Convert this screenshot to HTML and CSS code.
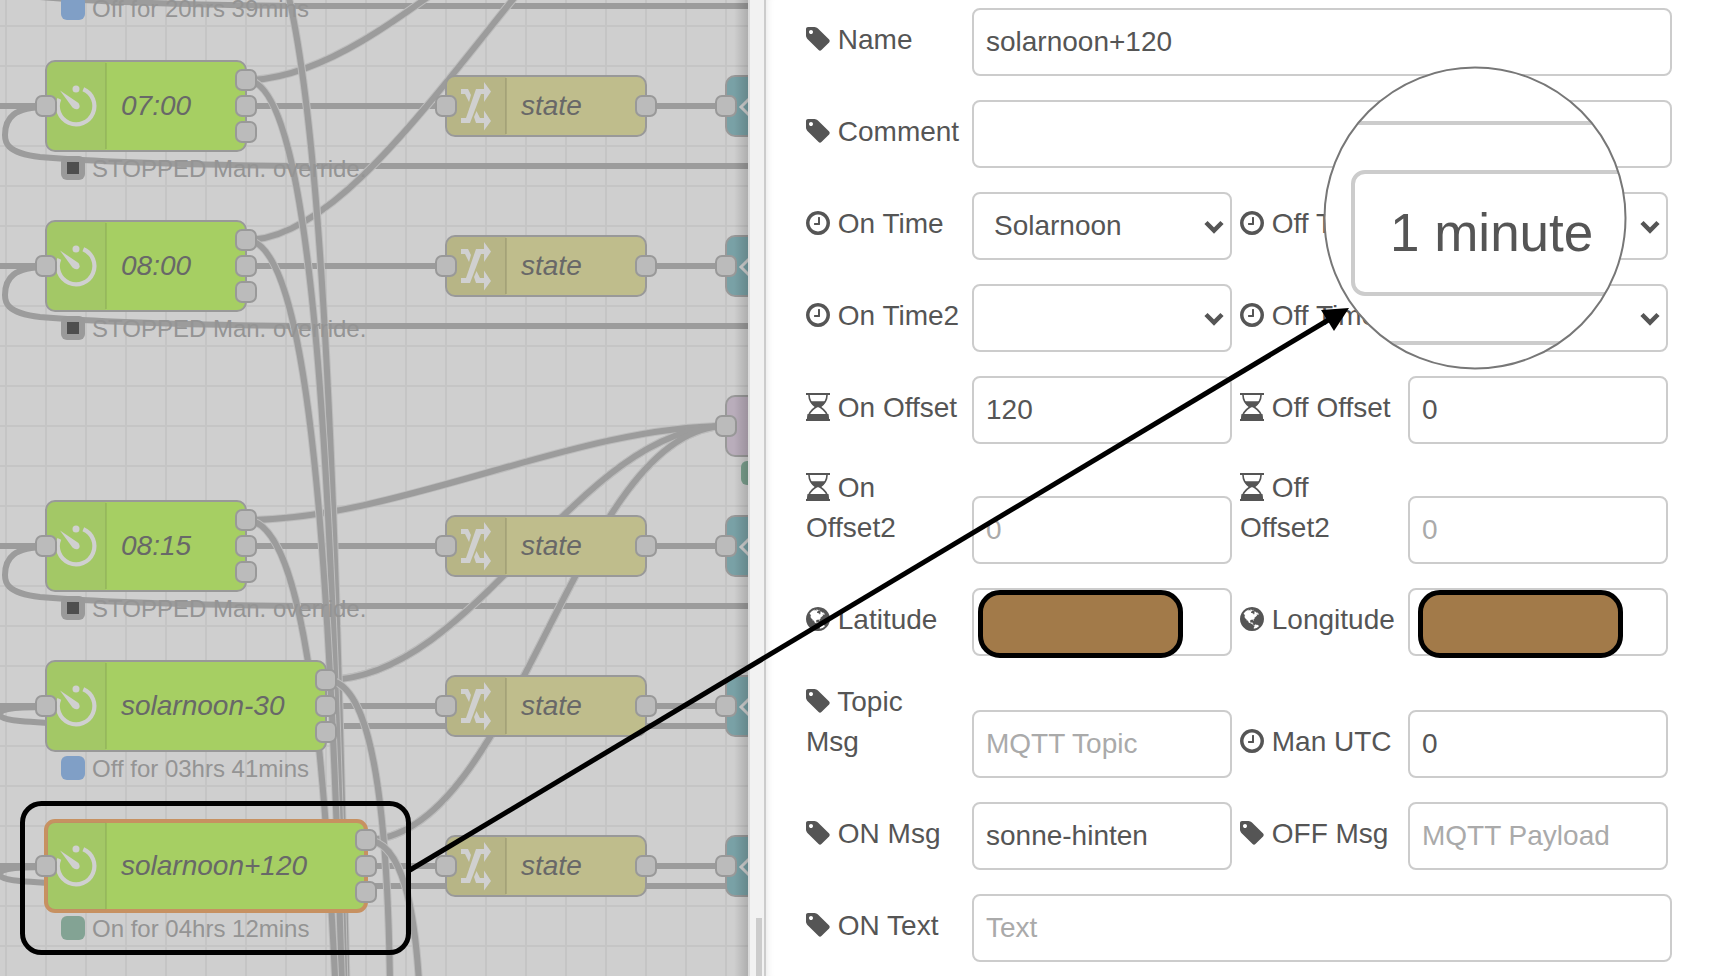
FILE: index.html
```html
<!DOCTYPE html>
<html lang="en">
<head>
<meta charset="utf-8">
<title>Edit schedule node</title>
<link rel="stylesheet" href="styles.css">
</head>
<body>
<svg class="sprite" width="0" height="0" aria-hidden="true">
  <symbol id="i-tag" viewBox="0 0 1536 1792"><path d="M448 448q0-53-37.500-90.500T320 320t-90.500 37.500T192 448t37.500 90.500T320 576t90.500-37.500T448 448zm1067 576q0 53-37 90l-491 492q-39 37-91 37-53 0-90-37L91 890Q53 853 26.500 788T0 669V256q0-52 38-90t90-38h416q53 0 118 26.500t103 63.500l715 714q37 39 37 91z"/></symbol>
  <symbol id="i-clock" viewBox="0 0 1536 1792"><path d="M896 544v448q0 14-9 23t-23 9H544q-14 0-23-9t-9-23v-64q0-14 9-23t23-9h224V544q0-14 9-23t23-9h64q14 0 23 9t9 23zm416 352q0-148-73-273t-198-198-273-73-273 73-198 198-73 273 73 273 198 198 273 73 273-73 198-198 73-273zm224 0q0 209-103 385.500T1153.500 1561 768 1664t-385.500-103T103 1281.500 0 896t103-385.500T382.500 231 768 128t385.500 103T1433 510.500 1536 896z"/></symbol>
  <symbol id="i-glass" viewBox="0 0 24 28"><path d="M0 0h24v2H0zM0 26h24v2H0zM1.500 21h21l.7 5.500H.8z"/><path d="M3 2C3 9 7 12 10 14C7 16 2 19 2 26M21 2C21 9 17 12 14 14C17 16 22 19 22 26" fill="none" stroke="currentColor" stroke-width="1.600"/><path d="M4.500 8.300h15C18.500 11 16 13 14 14.200h-4C8 13 5.500 11 4.500 8.300z"/></symbol>
  <symbol id="i-globe" viewBox="0 0 1536 1792"><path d="M768 128q209 0 385.500 103t279.500 279.500 103 385.500-103 385.500-279.500 279.500-385.500 103-385.500-103-279.500-279.500-103-385.500 103-385.500 279.500-279.500 385.500-103zm274 521q-2 1-9.500 9.500t-13.500 9.500q2 0 4.500-5t5-11 3.500-7q6-7 22-15 14-6 52-12 34-8 51 11-2-2 9.500-13t14.500-12q3-2 15-4.500t15-7.500l2-22q-12 1-17.500-7t-6.500-21q0 2-6 8 0-7-4.500-8t-11.500 1-9 1q-10-3-15-7.500t-8-16.500-4-15q-2-5-9.500-11t-9.500-10q-1-2-2.500-5.500t-3-6.500-4-5.500-5.500-2.500-7 5-7.500 10-4.500 5q-3-2-6-1.500t-4.500 1-4.500 3-5 3.500q-3 2-8.500 3t-8.500 2q15-5-1-11-10-4-16-3 9-4 7.500-12t-8.500-14h5q-1-4-8.500-8.500t-17.500-8.500-13-6q-8-5-34-9.500t-33-.5q-5 6-4.500 10.500t4 14 3.500 12.500q1 6-5.500 13t-6.500 12q0 7 14 15.500t10 21.500q-3 8-16 16t-16 12q-5 8-1.500 18.500t10.500 16.500q2 2 1.500 4t-3.500 4.500-5.500 4-6.500 3.500l-3 2q-11 5-20.500-6t-13.500-26q-7-25-16-30-23-8-29 1-5-13-41-26-25-9-58-4 6-1 0-15-7-15-19-12 3-6 4-17.500t1-13.500q3-13 12-23 1-1 7-8.500t9.500-13.500.5-6q35 4 50-11 5-5 11.500-17t10.500-17q9-6 14-5.500t14.500 5.500 14.500 5q14 1 15.500-11t-7.500-20q12 1 3-17-4-7-8-9-12-4-27 5-8 4 2 8-1-1-9.500 10.500t-16.500 17.500-16-5q-1-1-5.500-13.500t-9.500-13.500q-8 0-16 15 3-8-11-15t-24-8q19-12-8-27-7-4-20.500-5t-19.500 4q-5 7-5.500 11.500t5 8 10.500 5.500 11.500 4 8.500 3q14 10 8 14-2 1-8.500 3.500t-11.500 4.500-6 4q-3 4 0 14t-2 14q-5-5-9-17.500t-7-16.500q7 9-25 6l-10-1q-4 0-16 2t-20.500 1-13.500-8q-4-8 0-20 1-4 4-2-4-3-11-9.500t-10-8.500q-46 15-94 41 6 1 12-1 5-2 13-6.500t10-5.500q34-14 42-7l5-5q14 16 20 25-7-4-30-1-20 6-22 12 7 12 5 18-4-3-11.500-10t-14.500-11-15-5q-16 0-22 1-146 80-235 222 7 7 12 8 4 1 5 9t2.500 11 11.500-3q9 8 3 19 1-1 44 27 19 17 21 21 3 11-10 18-1-2-9-9t-9-4q-3 5 .5 18.500t10.500 12.500q-7 0-9.500 16t-2.500 35.500-1 23.500l2 1q-3 12 5.500 34.500t21.500 19.500q-13 3 20 43 6 8 8 9 3 2 12 7.500t15 10 10 10.500q4 5 10 22.500t14 23.500q-2 6 9.500 20t10.500 23q-1 0-2.500 1t-2.500 1q3 7 15.500 14t15.500 13q1 3 2 10t3 11 8 2q2-20-24-62-15-25-17-29-3-5-5.500-15.500t-4.500-14.500q2 0 6 1.500t8.500 3.500 7.500 4 2 3q-3 7 2 17.500t12 18.500 17 19 12 13q6 6 14 19.500t0 13.500q9 0 20 10t17 20q5 8 8 26t5 24q2 7 8.500 13.500t12.500 9.500l16 8 13 7q5 2 18.500 10.500t21.500 11.500q10 4 16 4t14.500-2.500 13.500-3.500q15-2 29 15t21 21q36 19 55 11-2 1 .5 7.500t8 15.500 9 14.500 5.500 8.500q5 6 18 15t18 15q6-4 7-9-3 8 7 20t18 10q14-3 14-32-31 15-49-18 0-1-2.500-5.500t-4-8.500-2.500-8.500 0-7.500 5-3q9 0 10-3.500t-2-12.500-4-13q-1-8-11-20t-12-15q-5 9-16 8t-16-9q0 1-1.500 5.500t-1.500 6.500q-13 0-15-1 1-3 2.500-17.500t3.500-22.500q1-4 5.500-12t7.500-14.500 4-12.500-4.500-9.500-17.500-2.500q-19 1-26 20-1 3-3 10.500t-5 11.500-9 7q-7 3-24 2t-24-5q-13-8-22.500-29t-9.500-37q0-10 2.500-26.500t3-25-5.500-24.500q3-2 9-9.500t10-10.500q2-1 4.500-1.500t4.500 0 4-1.500 3-6q-1-1-4-3-3-3-4-3 7 3 28.500-1.500t27.500 1.500q15 11 22-2 0-1-2.500-9.500t-.5-13.500q5 27 29 9 3 3 15.500 5t17.500 5q3 2 7 5.500t5.500 4.500 5-.5 8.500-6.500q10 14 12 24 11 40 19 44 7 3 11 2t4.500-9.500 0-14-1.500-12.500l-1-8v-18l-1-8q-15-3-18.500-12t1.500-18.500 15-18.500q1-1 8-3.500t15.500-6.500 12.500-8q21-19 15-35 7 0 11-9-1 0-5-3t-7.500-5-4.500-2q9-5 2-16 5-3 7.500-11t7.500-10q9 12 21 2 8-8 1-16 5-7 20.500-10.500t18.500-9.500q7 2 8-2t1-12 3-12q4-5 15-9t13-5l17-11q3-4 0-4 18 2 31-11 10-11-6-20 3-6-3-9.500t-15-5.500q3-1 11.500-.5t10.500-1.500q15-10-7-16-17-5-43 12zm-163 877q206-36 351-189-3-3-12.500-4.500t-12.500-3.500q-18-7-24-8 1-7-2.500-13t-8-9-12.500-8-11-7q-2-2-7-6t-7-5.500-7.500-4.500-8.500-2-10 1l-3 1q-3 1-5.500 2.500t-5.500 3-4 3 0 2.500q-21-17-36-22-5-1-11-5.500t-10.500-7-10-1.500-11.500 7q-5 5-6 15t-2 13q-7-5 0-17.500t2-18.500q-3-6-10.500-4.500t-12 4.500-11.500 8.500-9 6.500-8.500 5.500-8.500 7.500q-3 4-6 12t-5 11q-2-4-11.500-6.500t-9.500-5.500q2 10 4 35t5 38q7 31-12 48-27 25-29 40-4 22 12 26 0 7-8 20.500t-7 21.500q0 6 2 16z"/></symbol>
  <symbol id="i-chevron" viewBox="0 0 20 14"><path d="M2 2.500l8 8 8-8" fill="none" stroke="currentColor" stroke-width="4.500"/></symbol>
</svg>

<div class="editor">
  <section class="workspace" aria-label="Flow workspace">
    <svg class="flow" width="748" height="976" viewBox="0 0 748 976">
      <defs>
        <pattern id="grid" x="5" y="25" width="40" height="40" patternUnits="userSpaceOnUse"><path d="M1 0V40M0 1H40" stroke="#c5c5c5" stroke-width="2"/></pattern>
        <linearGradient id="edge"><stop offset="0" stop-color="#000" stop-opacity="0"/><stop offset="1" stop-color="#000" stop-opacity=".16"/></linearGradient>
        <rect id="port" x="-10" y="-10" width="20" height="20" rx="6"/>
        <g id="timer">
          <path d="M7.300-16.800A18.300 18.300 0 1 1-16.700-7.200" fill="none" stroke="#d0d0d0" stroke-width="4.200"/>
          <circle cx="0" cy="-17" r="3.500" fill="#d0d0d0"/>
          <path d="M-16-15.500L2.500-3Q5 1 2 3Q-1 4-3.500 1.500Z" fill="#d0d0d0"/>
        </g>
        <g id="state">
          <rect class="fn" x="0" y="-30" width="200" height="60" rx="9"/>
          <path d="M10-29H60V29H10Q1 29 1 20V-20Q1-29 10-29Z" fill="#000" opacity=".04"/>
          <path d="M60-28V28" stroke="#000" stroke-opacity=".1" stroke-width="2"/>
          <path fill="#d0d0d0" d="M15 17H24L35-12H38V-4L45-14.500L38-24V-17H30L20 12H15ZM15-17H22L25-11L23-4L19-12H15ZM30.500 5L34 12H38V4.500L45 15L38 24.500V17H30L28 11Z"/>
          <text class="node-label" x="75" y="9">state</text>
          <use href="#port" class="port"/><use href="#port" class="port" x="200"/>
          <g transform="translate(280 0)">
            <rect class="link-node" x="0" y="-30" width="100" height="60" rx="9"/>
            <path d="M24-8L15 1L24 10" fill="none" stroke="#d0d0d0" stroke-width="3"/>
            <use href="#port" class="port"/>
          </g>
        </g>
        <g id="node200"><rect class="sched" x="0" y="-45" width="200" height="90" rx="9"/></g>
        <g id="shade"><path d="M10-44H60V44H10Q1 44 1 35V-35Q1-44 10-44Z" fill="#888" opacity=".09"/><path d="M60-43V43" stroke="#000" stroke-opacity=".08" stroke-width="2"/><use href="#timer" x="30"/><use href="#port" class="port"/></g>
        <g id="outs"><use href="#port" class="port" y="-26"/><use href="#port" class="port"/><use href="#port" class="port" y="26"/></g>
        <path id="loop" d="M702 60H254C154 59 54 56-6 51C-41 47-41 35-41 29C-41 12-32 1 0 1"/>
        <path id="loop2" d="M702 20H154C54 19 4 18-26 15C-50 13-52 6-38 3C-26 1-10 1 0 1"/>
        <path id="straight" d="M-60 0H0M200 0H400M600 0H680"/>
        <g id="stopped"><rect x="15" y="50" width="24" height="24" rx="6" fill="#9a9a9a"/><rect x="21" y="56" width="12" height="12" fill="#4e4e4e"/><text class="status" x="46" y="71">STOPPED Man. override.</text></g>
      </defs>
      <rect width="748" height="976" fill="#cfcfcf"/>
      <rect width="748" height="976" fill="url(#grid)"/>
      <g class="wire-edge">
        <path d="M246 520C396 520 576 426 726 426M326 680C476 680 576 426 726 426M366 840C516 840 576 426 726 426"/>
      </g>
      <g class="wires">
        <use href="#loop" x="46" y="-54"/><use href="#loop" x="46" y="106"/><use href="#loop" x="46" y="266"/><use href="#loop" x="46" y="546"/>
        <use href="#loop2" x="46" y="706"/><use href="#loop2" x="46" y="866"/>
        <use href="#straight" x="46" y="106"/><use href="#straight" x="46" y="266"/><use href="#straight" x="46" y="546"/><use href="#straight" x="46" y="706"/><use href="#straight" x="46" y="866"/>
      </g>
      <g class="wire-edge">
        <path d="M246 80C396 80 576-174 726-174"/><path d="M246 240C396 240 576-174 726-174"/>
        <path d="M326 680C476 680 576 426 726 426"/><path d="M366 840C516 840 576 426 726 426"/>
      </g>
      <g class="wires">
        <path d="M246 80C396 80 576-174 726-174"/><path d="M246 240C396 240 576-174 726-174"/>
        <path d="M246 520C396 520 576 426 726 426"/>
        <path d="M326 680C476 680 576 426 726 426"/><path d="M366 840C516 840 576 426 726 426"/>
      </g>
      <path class="wire-edge" d="M246-80C396-80 296 2006 446 2006"/><path class="wires" d="M246-80C396-80 296 2006 446 2006"/>
      <path class="wire-edge" d="M246 80C396 80 296 2006 446 2006"/><path class="wires" d="M246 80C396 80 296 2006 446 2006"/>
      <path class="wire-edge" d="M246 240C396 240 296 2006 446 2006"/><path class="wires" d="M246 240C396 240 296 2006 446 2006"/>
      <path class="wire-edge" d="M246 520C396 520 296 2006 446 2006"/><path class="wires" d="M246 520C396 520 296 2006 446 2006"/>
      <path class="wire-edge" d="M326 680C476 680 296 2006 446 2006"/><path class="wires" d="M326 680C476 680 296 2006 446 2006"/>
      <path class="wire-edge" d="M366 840C516 840 296 2006 446 2006"/><path class="wires" d="M366 840C516 840 296 2006 446 2006"/>

      <rect x="61" y="-4" width="24" height="24" rx="6" fill="#809fc6"/><text class="status" x="92" y="17">Off for 20hrs 39mins</text>

      <g transform="translate(46 106)"><use href="#node200"/><use href="#shade"/><use href="#outs" x="200"/><text class="node-label" x="75" y="9">07:00</text><use href="#stopped"/></g>
      <g transform="translate(46 266)"><use href="#node200"/><use href="#shade"/><use href="#outs" x="200"/><text class="node-label" x="75" y="9">08:00</text><use href="#stopped"/></g>
      <g transform="translate(46 546)"><use href="#node200"/><use href="#shade"/><use href="#outs" x="200"/><text class="node-label" x="75" y="9">08:15</text><use href="#stopped"/></g>
      <g transform="translate(46 706)"><rect class="sched" x="0" y="-45" width="280" height="90" rx="9"/><use href="#shade"/><use href="#outs" x="280"/><text class="node-label" x="75" y="9">solarnoon-30</text><rect x="15" y="50" width="24" height="24" rx="6" fill="#809fc6"/><text class="status" x="46" y="71">Off for 03hrs 41mins</text></g>
      <g transform="translate(46 866)"><rect class="sched selected" x="0" y="-45" width="320" height="90" rx="9"/><use href="#shade"/><use href="#outs" x="320"/><text class="node-label" x="75" y="9">solarnoon+120</text><rect x="15" y="50" width="24" height="24" rx="6" fill="#83a394"/><text class="status" x="46" y="71">On for 04hrs 12mins</text></g>

      <use href="#state" x="446" y="106"/><use href="#state" x="446" y="266"/><use href="#state" x="446" y="546"/><use href="#state" x="446" y="706"/><use href="#state" x="446" y="866"/>
      <g transform="translate(726 426)"><rect class="mqtt" x="0" y="-30" width="100" height="60" rx="9"/><use href="#port" class="port"/><rect x="15" y="35" width="24" height="24" rx="6" fill="#7ba08e"/></g>
      <rect x="734" width="14" height="976" fill="url(#edge)"/>
    </svg>
  </section>

  <div class="splitter" role="separator"><div class="thumb"></div></div>

  <form class="tray">
    <div class="group">
      <div class="row wide">
        <label for="name"><svg class="icon"><use href="#i-tag"/></svg> Name</label>
        <div class="field"><input id="name" type="text" value="solarnoon+120"></div>
      </div>
      <div class="row wide">
        <label for="comment"><svg class="icon"><use href="#i-tag"/></svg> Comment</label>
        <div class="field"><input id="comment" type="text"></div>
      </div>
      <div class="row">
        <label for="ontime"><svg class="icon"><use href="#i-clock"/></svg> On Time</label>
        <div class="field"><select id="ontime"><option>Solarnoon</option></select><svg class="chevron"><use href="#i-chevron"/></svg></div>
        <label for="offtime"><svg class="icon"><use href="#i-clock"/></svg> Off Time</label>
        <div class="field"><select id="offtime"><option>1 minute</option></select><svg class="chevron"><use href="#i-chevron"/></svg></div>
      </div>
      <div class="row">
        <label for="ontime2"><svg class="icon"><use href="#i-clock"/></svg> On Time2</label>
        <div class="field"><select id="ontime2"><option></option></select><svg class="chevron"><use href="#i-chevron"/></svg></div>
        <label for="offtime2"><svg class="icon"><use href="#i-clock"/></svg> Off Time2</label>
        <div class="field"><select id="offtime2"><option></option></select><svg class="chevron"><use href="#i-chevron"/></svg></div>
      </div>
      <div class="row">
        <label for="onoff"><svg class="icon"><use href="#i-glass"/></svg> On Offset</label>
        <div class="field"><input id="onoff" type="text" value="120"></div>
        <label for="offoff"><svg class="icon"><use href="#i-glass"/></svg> Off Offset</label>
        <div class="field"><input id="offoff" type="text" value="0"></div>
      </div>
      <div class="row">
        <label for="onoff2"><svg class="icon"><use href="#i-glass"/></svg> On<br>Offset2</label>
        <div class="field"><input id="onoff2" type="text" placeholder="0"></div>
        <label for="offoff2"><svg class="icon"><use href="#i-glass"/></svg> Off<br>Offset2</label>
        <div class="field"><input id="offoff2" type="text" placeholder="0"></div>
      </div>
      <div class="row">
        <label for="lat"><svg class="icon"><use href="#i-globe"/></svg> Latitude</label>
        <div class="field"><input id="lat" type="text"><span class="cover"></span></div>
        <label for="lon"><svg class="icon"><use href="#i-globe"/></svg> Longitude</label>
        <div class="field"><input id="lon" type="text"><span class="cover cover-lon"></span></div>
      </div>
    </div>
    <div class="group">
      <div class="row">
        <label for="topic"><svg class="icon"><use href="#i-tag"/></svg> Topic<br>Msg</label>
        <div class="field"><input id="topic" type="text" placeholder="MQTT Topic"></div>
        <label for="utc"><svg class="icon"><use href="#i-clock"/></svg> Man UTC</label>
        <div class="field"><input id="utc" type="text" value="0"></div>
      </div>
      <div class="row">
        <label for="onmsg"><svg class="icon"><use href="#i-tag"/></svg> ON Msg</label>
        <div class="field"><input id="onmsg" type="text" value="sonne-hinten"></div>
        <label for="offmsg"><svg class="icon"><use href="#i-tag"/></svg> OFF Msg</label>
        <div class="field"><input id="offmsg" type="text" placeholder="MQTT Payload"></div>
      </div>
      <div class="row wide">
        <label for="ontext"><svg class="icon"><use href="#i-tag"/></svg> ON Text</label>
        <div class="field"><input id="ontext" type="text" placeholder="Text"></div>
      </div>
    </div>
  </form>
</div>

<svg class="annotations" width="1710" height="976" viewBox="0 0 1710 976">
  <clipPath id="lens"><circle cx="1475" cy="218" r="150"/></clipPath>
  <g clip-path="url(#lens)">
    <rect x="1320" y="60" width="310" height="310" fill="#fff"/>
    <path d="M1320 123H1640M1320 343H1640" stroke="#ccc" stroke-width="4"/>
    <rect x="1353" y="172" width="400" height="122" rx="12" fill="#fff" stroke="#ccc" stroke-width="4"/>
    <text class="lens-text" x="1390" y="251">1 minute</text>
  </g>
  <circle cx="1475" cy="218" r="150.500" fill="none" stroke="#777" stroke-width="2"/>
  <rect x="22.500" y="803.500" width="386" height="149" rx="19" fill="none" stroke="#000" stroke-width="5"/>
  <path d="M410 870L1335 316" stroke="#000" stroke-width="5"/>
  <path d="M1349 308L1321 310L1334 331Z"/>
</svg>
</body>
</html>
```
FILE: styles.css
```css
* {
  box-sizing: border-box;
}

body {
  margin: 0;
  height: 100vh;
  overflow: hidden;
  position: relative;
  background: #fff;
  color: #555;
  font: 28px/40px "Liberation Sans", Arial, sans-serif;
}

.sprite {
  position: absolute;
}

.editor {
  display: flex;
  height: 100%;
}

.workspace {
  flex: 0 0 748px;
  overflow: hidden;
  background: #cfcfcf;
}

.flow {
  display: block;
}

.wires {
  fill: none;
  stroke: #9c9c9c;
  stroke-width: 6;
}

.wire-edge {
  fill: none;
  stroke: #bdbdbd;
  stroke-width: 8;
}

.port {
  fill: #bbb;
  stroke: #999;
  stroke-width: 2;
}

.sched {
  fill: #a6cf63;
  stroke: #999;
  stroke-width: 2;
}

.selected {
  stroke: #c79161;
  stroke-width: 4;
}

.fn {
  fill: #bfbd8c;
  stroke: #999;
  stroke-width: 2;
}

.link-node {
  fill: #79a1a6;
  stroke: #999;
  stroke-width: 2;
}

.mqtt {
  fill: #b9adbb;
  stroke: #999;
  stroke-width: 2;
}

.node-label {
  font-size: 28px;
  font-style: italic;
  fill: #686868;
}

.status {
  font-size: 24px;
  fill: #949494;
}

.splitter {
  flex: 0 0 18px;
  display: flex;
  flex-direction: column;
  justify-content: flex-end;
  padding-left: 6px;
  background: #f2f2f2;
  border-left: 2px solid #dcdcdc;
  border-right: 2px solid #ccc;
}

.thumb {
  width: 6px;
  height: 58px;
  background: #ccc;
}

.tray {
  flex: 1;
  min-width: 0;
  padding: 8px 38px 0 40px;
  box-shadow: inset 8px 0 8px -8px rgba(0, 0, 0, 0.12);
}

.group {
  display: flex;
  flex-direction: column;
  gap: 24px;
}

.group + .group {
  margin-top: 26px;
}

.row {
  display: grid;
  grid-template-columns: 166px minmax(0, 1fr) 176px minmax(0, 1fr);
  align-items: end;
  padding-right: 4px;
}

.row.wide {
  grid-template-columns: 166px minmax(0, 1fr);
  padding-right: 0;
}

label {
  padding-bottom: 16px;
  white-space: nowrap;
}

.field + label {
  padding-left: 8px;
}

.icon {
  width: 24px;
  height: 28px;
  vertical-align: -4px;
  fill: currentColor;
}

.field {
  position: relative;
  height: 68px;
}

input,
select {
  display: block;
  width: 100%;
  height: 68px;
  margin: 0;
  padding: 0 12px;
  border: 2px solid #ccc;
  border-radius: 8px;
  background: #fff;
  color: #555;
  font: inherit;
  appearance: none;
}

select {
  padding-left: 20px;
}

input::placeholder {
  color: #aaa;
  opacity: 1;
}

.chevron {
  position: absolute;
  top: 28px;
  right: 8px;
  width: 20px;
  height: 14px;
  pointer-events: none;
}

.cover {
  position: absolute;
  top: 2px;
  left: 6px;
  width: 205px;
  height: 68px;
  border: 5px solid #000;
  border-radius: 22px;
  background: #a27a49;
}

.cover-lon {
  left: 10px;
}

.annotations {
  position: absolute;
  top: 0;
  left: 0;
  pointer-events: none;
}

.lens-text {
  font-size: 53px;
  fill: #555;
}
```
